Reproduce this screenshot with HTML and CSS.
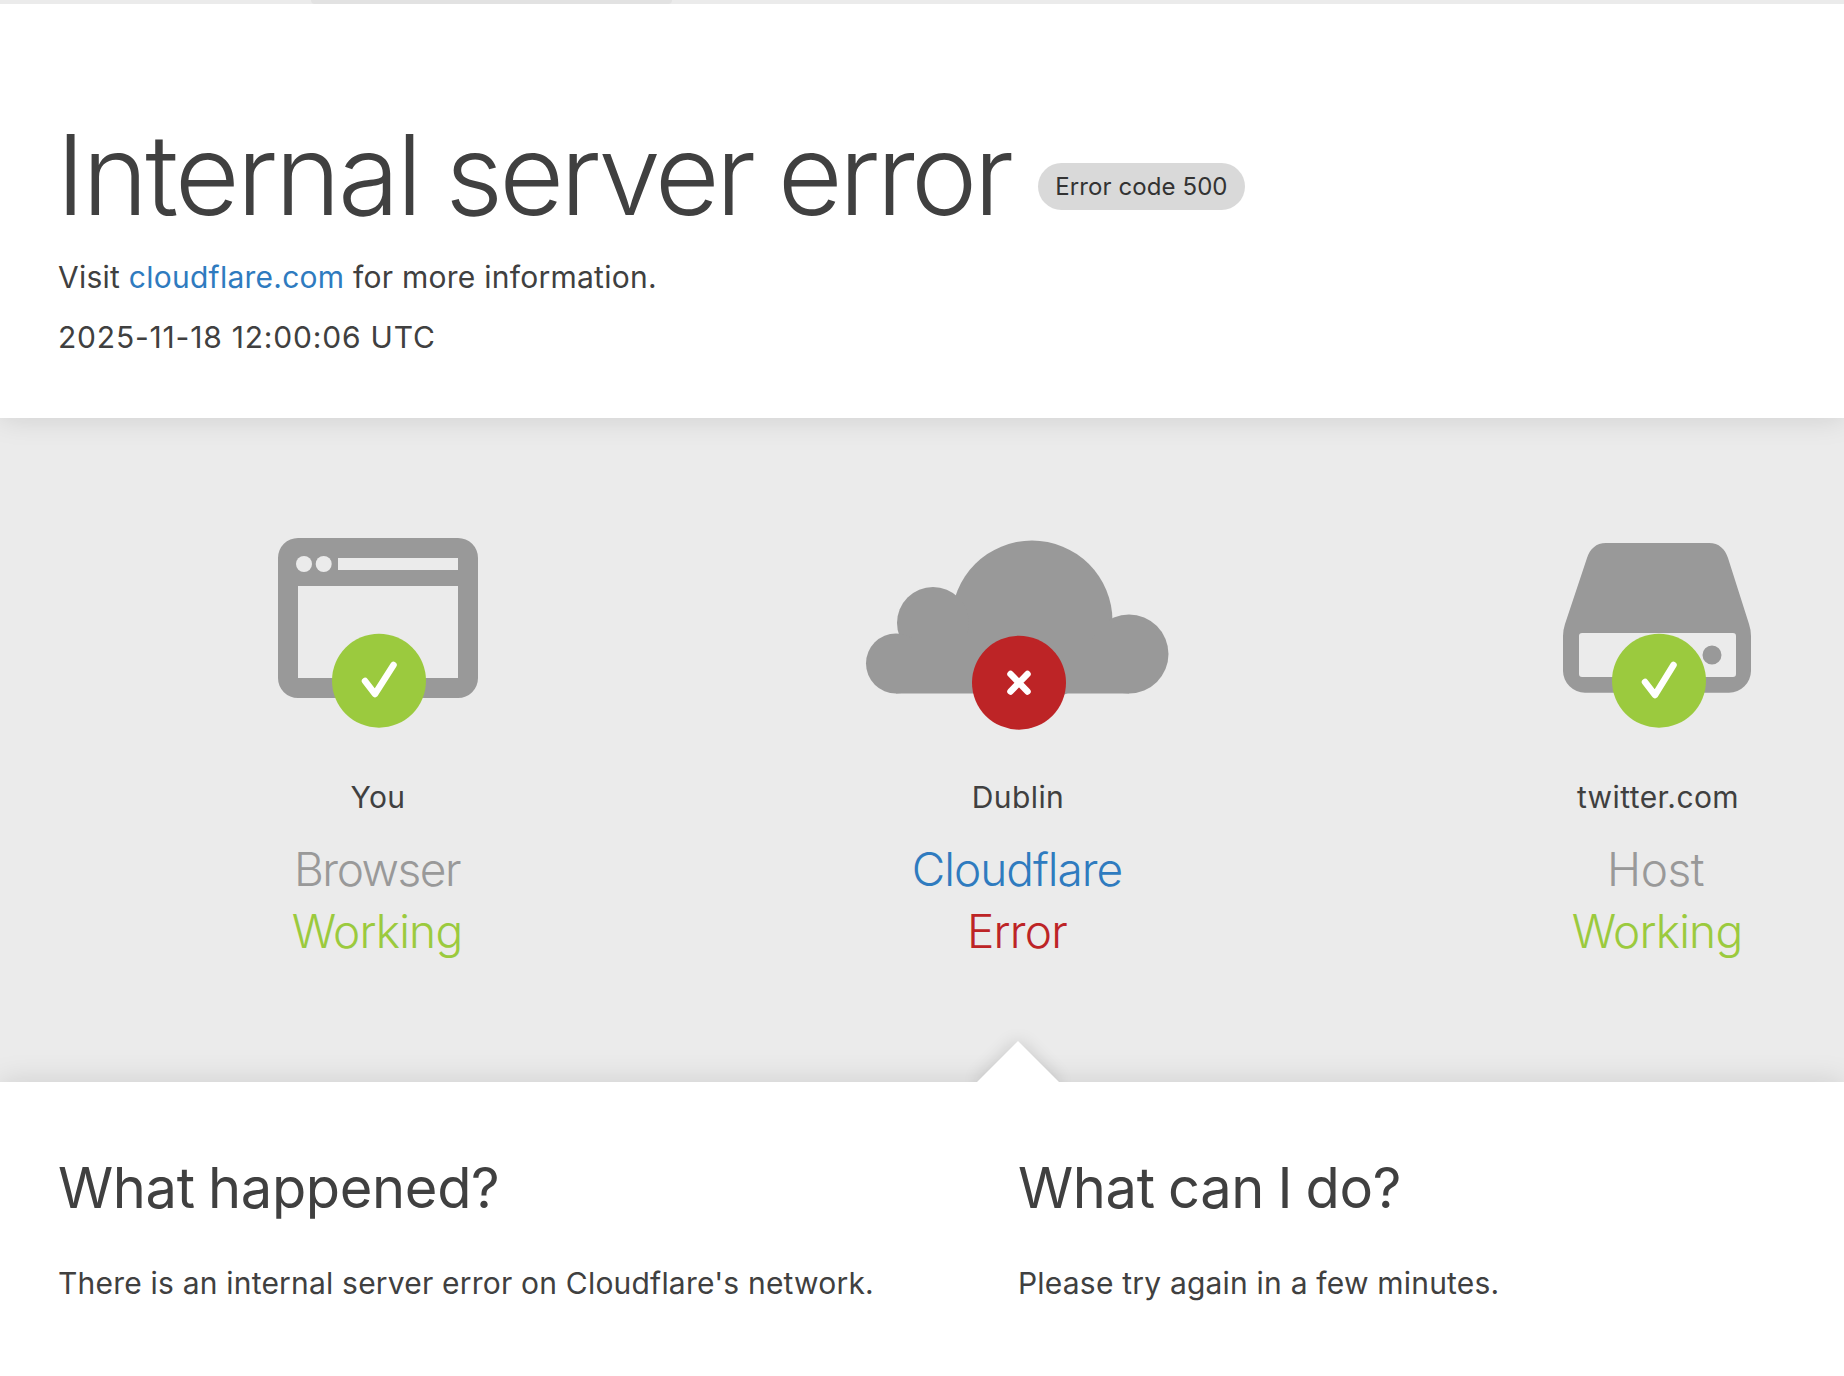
FILE: index.html
```html
<!DOCTYPE html>
<html lang="en">
<head>
<meta charset="utf-8">
<title>Internal server error | Cloudflare</title>
<link rel="stylesheet" href="styles.css">
</head>
<body>
<div class="topstrip"><div class="topstrip-seg"></div></div>
<header class="head">
  <h1 class="title"><span><span class="title-first">Internal</span> server error</span><span class="badge">Error code 500</span></h1>
  <p class="line">Visit <a class="link" href="#">cloudflare.com</a> for more information.</p>
  <p class="line line-time">2025-11-18 12:00:06 UTC</p>
</header>
<section class="status">
  <div class="col">
    <svg class="icon" viewBox="218 530 320 200" width="320" height="200">
      <path class="g" fill-rule="evenodd" d="M298 538H458A20 20 0 0 1 478 558V678A20 20 0 0 1 458 698H298A20 20 0 0 1 278 678V558A20 20 0 0 1 298 538ZM298 586V678H458V586ZM338 558V570H458V558Z"/>
      <circle class="bg" cx="304" cy="564" r="8"/><circle class="bg" cx="323.7" cy="564" r="8"/>
      <circle class="ok" cx="379" cy="680.7" r="47"/>
      <path class="mark" d="M365 681L375 694L393.500 665"/>
    </svg>
    <div class="place">You</div>
    <div class="kind kind-browser">Browser</div>
    <div class="state state-ok">Working</div>
  </div>
  <div class="col">
    <svg class="icon" viewBox="858 530 320 200" width="320" height="200">
      <circle class="g" cx="1032" cy="621" r="80.500"/><circle class="g" cx="933" cy="623" r="36"/>
      <circle class="g" cx="896" cy="663.500" r="30"/><circle class="g" cx="1129" cy="654" r="39.500"/>
      <rect class="g" x="896" y="640" width="233" height="53.500"/>
      <circle class="bad" cx="1019" cy="682.700" r="47"/>
      <path class="mark" d="M1010.500 674L1027.500 691.500M1027.500 674L1010.500 691.500"/>
    </svg>
    <div class="place">Dublin</div>
    <a class="kind kind-link" href="#">Cloudflare</a>
    <div class="state state-bad">Error</div>
  </div>
  <div class="col">
    <svg class="icon" viewBox="1498 530 320 200" width="320" height="200">
      <path class="g" fill-rule="evenodd" d="M1606 543H1709C1719 543 1725 549 1728 558L1749 624Q1751 630 1751 636V671A22 22 0 0 1 1729 692.700H1585A22 22 0 0 1 1563 671V636Q1563 630 1565 624L1587 558C1590 549 1596 543 1606 543ZM1582 633A3 3 0 0 0 1579 636V674A3 3 0 0 0 1582 677H1733A3 3 0 0 0 1736 674V636A3 3 0 0 0 1733 633ZM1712 645.500A9.500 9.500 0 1 0 1712 664.500A9.500 9.500 0 1 0 1712 645.500Z"/>
      <circle class="ok" cx="1659" cy="680.700" r="47"/>
      <path class="mark" d="M1645 682L1655 695L1673.500 665"/>
    </svg>
    <div class="place">twitter.com</div>
    <div class="kind kind-host">Host</div>
    <div class="state state-ok">Working</div>
  </div>
</section>
<section class="details">
  <div class="notch-clip"><div class="notch"></div></div>
  <div class="detail">
    <h2 class="detail-title">What happened?</h2>
    <p class="detail-text">There is an internal server error on Cloudflare's network.</p>
  </div>
  <div class="detail">
    <h2 class="detail-title">What can I do?</h2>
    <p class="detail-text">Please try again in a few minutes.</p>
  </div>
</section>
</body>
</html>
```

FILE: styles.css
```css
html, body { margin: 0; padding: 0; background: #fff; }
body { width: 1844px; height: 1376px; overflow: hidden; font-family: Inter, "Liberation Sans", sans-serif; color: #404040; }
p, h1, h2 { margin: 0; }
a { text-decoration: none; }

.topstrip { position: relative; z-index: 3; height: 4px; background: #ebebeb; }
.topstrip-seg { width: 361px; height: 4px; margin-left: 311px; background: #e2e2e2; border-radius: 0 0 6px 6px; }

.head { position: relative; z-index: 2; height: 414px; padding: 108px 58px 0; box-sizing: border-box; background: #fff; box-shadow: 0 0 28px rgba(0,0,0,.13); }
.title { display: flex; align-items: center; margin-left: -2px; font-size: 112px; line-height: 124px; font-weight: 300; letter-spacing: -3.8px; word-spacing: -2.2px; height: 124px; }
.title-first { letter-spacing: -3px; }
.badge { display: block; height: 47px; line-height: 47px; margin: 24px 0 0 28px; padding: 0 17px; border-radius: 24px; background: #d9d9d9; font-size: 24px; font-weight: 400; letter-spacing: 0.1px; word-spacing: 0; color: #333; }
.line { font-size: 30px; line-height: 40px; margin-top: 21px; letter-spacing: 0.25px; }
.line-time { margin-top: 20px; letter-spacing: 0.8px; }
.link { color: #2f7bbf; }

.status { display: grid; grid-template-columns: repeat(3, 640px); height: 664px; padding: 0 0 0 58px; box-sizing: border-box; background: #ebebeb; overflow: hidden; }
.col { display: flex; flex-direction: column; align-items: center; padding-top: 112px; }
.icon { display: block; margin-bottom: 46.5px; flex: none; }
.g { fill: #999; }
.bg { fill: #ebebeb; }
.ok { fill: #9bca3e; }
.bad { fill: #bd2426; }
.mark { fill: none; stroke: #fff; stroke-width: 6.5px; stroke-linecap: round; stroke-linejoin: round; }
.place { font-size: 30px; line-height: 40px; letter-spacing: 0.4px; }
.kind { font-size: 46px; line-height: 60px; font-weight: 300; color: #999; margin: 22px 2px 0 0; letter-spacing: -1px; }
.kind-browser { letter-spacing: -1.5px; }
.kind-host { letter-spacing: -0.5px; margin-right: 5px; }
.kind-link { color: #2f7bbf; }
.state { font-size: 46px; line-height: 60px; font-weight: 300; margin: 2.5px 2px 0 0; letter-spacing: -0.8px; }
.state-ok { color: #9bca3e; }
.state-bad { color: #bd2426; }

.details { position: relative; z-index: 1; display: grid; grid-template-columns: 960px 1fr; padding: 0 0 0 58px; background: #fff; box-shadow: 0 0 28px rgba(0,0,0,.13); height: 294px; box-sizing: border-box; }
.notch-clip { position: absolute; left: 918px; top: -80px; width: 200px; height: 80px; overflow: hidden; }
.notch { position: absolute; left: 71px; top: 51px; width: 58px; height: 58px; background: #fff; transform: rotate(45deg); box-shadow: 0 0 18px rgba(0,0,0,.16); }
.detail { padding-top: 71px; }
.detail-title { font-size: 56px; line-height: 70px; font-weight: 400; letter-spacing: -0.35px; word-spacing: -2px; }
.detail-text { font-size: 30px; line-height: 40px; margin-top: 40px; letter-spacing: 0.2px; }
```
